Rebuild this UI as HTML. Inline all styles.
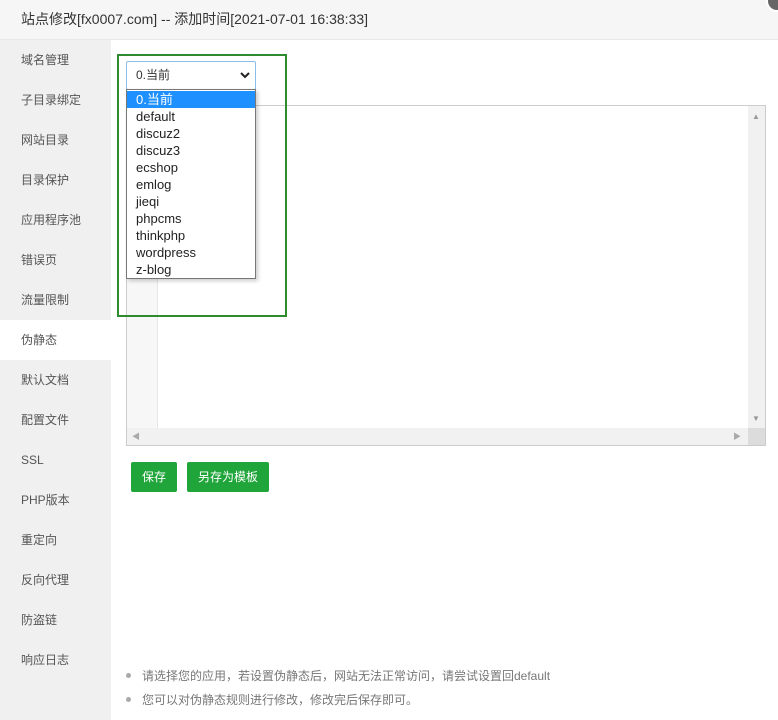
<!DOCTYPE html>
<html><head><meta charset="utf-8"><style>
*{margin:0;padding:0;box-sizing:border-box}
body{width:778px;height:720px;background:#fff;font-family:"Liberation Sans","Noto Sans CJK SC",sans-serif;position:relative;overflow:hidden;color:#333}
.hd{position:absolute;left:0;top:0;width:778px;height:40px;background:#f6f6f6;border-bottom:1px solid #e8e8e8;font-size:14px;line-height:39px;padding-left:21px;color:#333}
.cl{position:absolute;right:-10px;top:-10px;width:22px;height:22px;border-radius:50%;background:#666;border:2px solid #fff}
.sb{position:absolute;left:0;top:40px;width:111px;height:680px;background:#f0f0f0}
.sb div{height:40px;line-height:40px;padding-left:21px;font-size:12px;color:#555}
.sb .on{background:#fff}
.ed{position:absolute;left:126px;top:105px;width:640px;height:341px;border:1px solid #ccc;background:#fff}
.gut{position:absolute;left:0;top:0;width:31px;height:323px;background:#f7f7f7;border-right:1px solid #e6e6e6}
.vs{position:absolute;right:0;top:0;width:17px;height:323px;background:#f1f1f1}
.hs{position:absolute;left:0;bottom:0;width:638px;height:17px;background:#f1f1f1}
.cor{position:absolute;right:0;bottom:0;width:17px;height:17px;background:#dcdcdc}
.btn{position:absolute;top:462px;height:30px;background:#20a53a;color:#fff;font-size:12px;line-height:30px;text-align:center;border-radius:2px}
.gb{position:absolute;left:117px;top:54px;width:170px;height:263px;border:2px solid #2e8b2e}
.sel{position:absolute;left:126px;top:61px;width:130px;height:29px;border:1px solid #8cbce8;border-radius:2px;background:#fff;font-size:12px;line-height:27px;padding-left:9px}
.dd{position:absolute;left:126px;top:89px;width:130px;height:190px;border:1px solid #777;background:#fff;box-shadow:2px 2px 4px rgba(0,0,0,.2);font-size:13px;padding-top:1px}
.dd div{height:17px;line-height:17px;padding-left:9px;color:#222}
.dd .s{background:#1e90ff;color:#fff}
.tip{position:absolute;left:126px;font-size:12px;color:#777}
.tip:before{content:"";position:absolute;left:0;top:6px;width:5px;height:5px;border-radius:50%;background:#aaa}
.tip span{padding-left:16px}
</style></head><body>
<div class="hd">站点修改[fx0007.com] -- 添加时间[2021-07-01 16:38:33]</div>
<div class="cl"></div>
<div class="sb">
<div>域名管理</div><div>子目录绑定</div><div>网站目录</div><div>目录保护</div><div>应用程序池</div><div>错误页</div><div>流量限制</div><div class="on">伪静态</div><div>默认文档</div><div>配置文件</div><div>SSL</div><div>PHP版本</div><div>重定向</div><div>反向代理</div><div>防盗链</div><div>响应日志</div>
</div>
<div class="ed"><div class="gut"></div><div class="vs"><span style="position:absolute;left:4px;top:6px;font-size:8px;color:#999">▲</span><span style="position:absolute;left:4px;bottom:6px;font-size:8px;color:#999">▼</span></div><div class="hs"><span style="position:absolute;left:5px;top:3px;font-size:8px;color:#aaa">◀</span><span style="position:absolute;right:24px;top:3px;font-size:8px;color:#aaa">▶</span></div><div class="cor"></div></div>
<div class="btn" style="left:131px;width:46px">保存</div>
<div class="btn" style="left:187px;width:82px">另存为模板</div>
<div class="gb"></div>
<div class="sel">0.当前<svg style="position:absolute;right:5px;top:10px" width="10" height="7" viewBox="0 0 10 7"><path d="M1 1l4 4 4-4" stroke="#222" stroke-width="2" fill="none"/></svg></div>
<div class="dd"><div class="s">0.当前</div><div>default</div><div>discuz2</div><div>discuz3</div><div>ecshop</div><div>emlog</div><div>jieqi</div><div>phpcms</div><div>thinkphp</div><div>wordpress</div><div>z-blog</div></div>
<div class="tip" style="top:667px"><span>请选择您的应用，若设置伪静态后，网站无法正常访问，请尝试设置回default</span></div>
<div class="tip" style="top:691px"><span>您可以对伪静态规则进行修改，修改完后保存即可。</span></div>
</body></html>
